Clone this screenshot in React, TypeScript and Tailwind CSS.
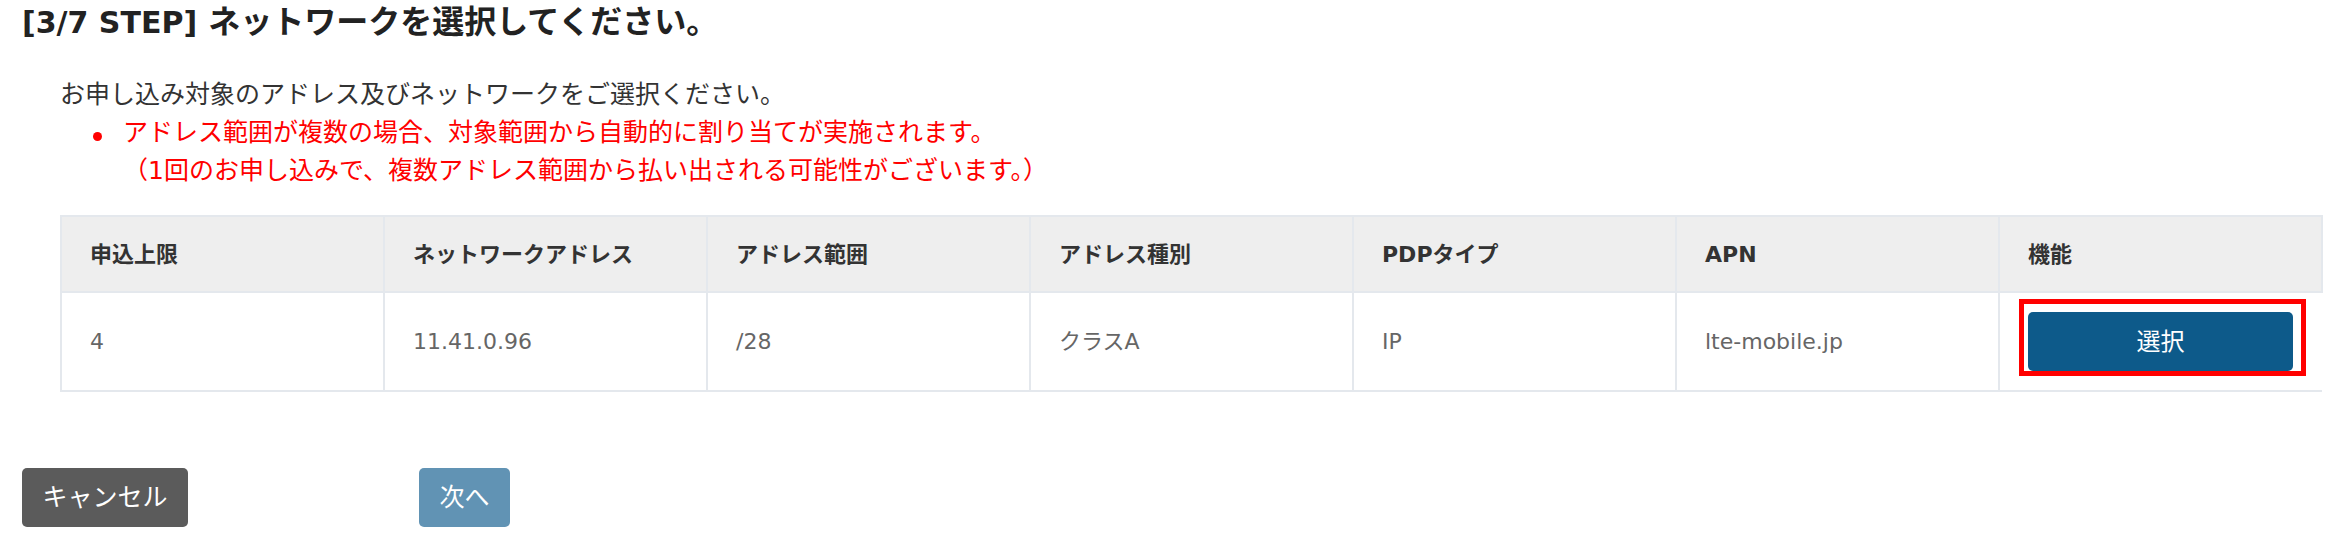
const FONT = "font-['DejaVu_Sans','Noto_Sans_CJK_JP',sans-serif]";

const columns = ['申込上限', 'ネットワークアドレス', 'アドレス範囲', 'アドレス種別', 'PDPタイプ', 'APN', '機能'];

const row = ['4', '11.41.0.96', '/28', 'クラスA', 'IP', 'lte-mobile.jp'];

export default function App() {
  return (
    <div className={`min-h-[540px] w-[2337px] bg-white pl-[22px] ${FONT}`}>
      {/* Title */}
      <h1 className="text-[32px] leading-[45px] font-bold text-[#222222]">
        <span className="text-[30px]">[3/7 STEP]</span> ネットワークを選択してください。
      </h1>

      <div className="ml-[38px] mt-[31px]">
        {/* Description */}
        <div className="text-[25px] leading-[38px] text-[#333333]">
          <p>お申し込み対象のアドレス及びネットワークをご選択ください。</p>
          <div className="text-[#ff0000]">
            <div className="flex items-center">
              <span className="ml-[33px] mt-[6px] h-[9px] w-[9px] rounded-full bg-[#ff0000]" />
              <span className="ml-[21px]">アドレス範囲が複数の場合、対象範囲から自動的に割り当てが実施されます。</span>
            </div>
            <p className="pl-[63px]">（1回のお申し込みで、複数アドレス範囲から払い出される可能性がございます。）</p>
          </div>
        </div>

        {/* Network table */}
        <table className="mt-[25px] w-[2263px] table-fixed border-collapse text-[22px]">
          <thead>
            <tr className="bg-[#eeeeee]">
              {columns.map((c) => (
                <th
                  key={c}
                  className="h-[76px] border-2 border-[#e4e8ed] px-[28px] text-left font-bold text-[#333333]"
                >
                  {c}
                </th>
              ))}
            </tr>
          </thead>
          <tbody>
            <tr>
              {row.map((v, i) => (
                <td key={i} className="h-[99px] border-2 border-[#e4e8ed] px-[28px] text-[#666666]">
                  {v}
                </td>
              ))}
              <td className="h-[99px] border-2 border-r-0 border-[#e4e8ed] px-[28px]">
                <div className="relative w-[265px]">
                  <button className="h-[59px] w-[265px] rounded-[5px] bg-[#0d5a8a] text-[24px] text-white">
                    選択
                  </button>
                  {/* highlight annotation */}
                  <div className="pointer-events-none absolute -left-[9px] -top-[13px] -right-[13px] -bottom-[5px] border-[5px] border-[#ff0000]" />
                </div>
              </td>
            </tr>
          </tbody>
        </table>
      </div>

      {/* Footer buttons */}
      <div className="mt-[76px] flex gap-[231px]">
        <button className="h-[59px] w-[166px] rounded-[5px] bg-[#5b5b5b] text-[25px] text-white">
          キャンセル
        </button>
        <button className="h-[59px] w-[91px] rounded-[5px] bg-[#6193b4] text-[25px] text-white">
          次へ
        </button>
      </div>
    </div>
  );
}
